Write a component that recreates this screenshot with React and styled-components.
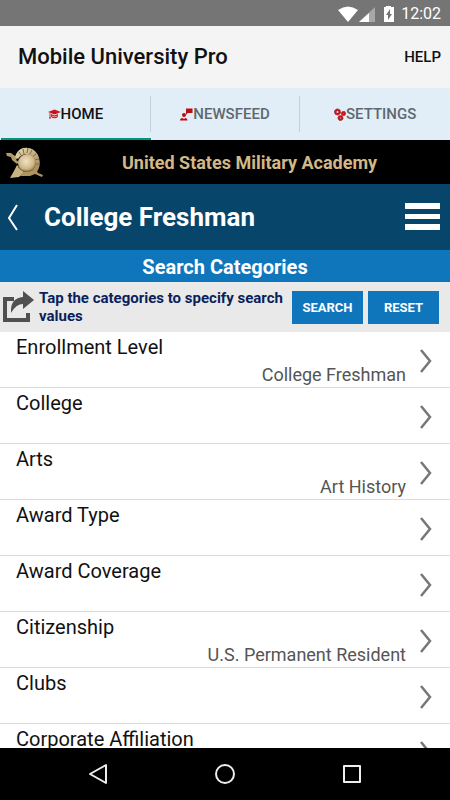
import React, { useState } from "react";
import styled, { createGlobalStyle } from "styled-components";

const categories = [
  { name: "Enrollment Level", value: "College Freshman" },
  { name: "College" },
  { name: "Arts", value: "Art History" },
  { name: "Award Type" },
  { name: "Award Coverage" },
  { name: "Citizenship", value: "U.S. Permanent Resident" },
  { name: "Clubs" },
  { name: "Corporate Affiliation" },
];

const CapIcon = () => (
  <svg width="13" height="10" viewBox="0 0 26 20" aria-hidden="true">
    <path d="M0 6 L13 1 L26 6 L13 11 Z" fill="#d0161c" />
    <path d="M6 10 L13 13 L20 10 L20 16 Q13 21 6 16 Z" fill="#d0161c" />
    <path d="M4 8 V14 M9 6 L17 8" stroke="#a30f14" strokeWidth="1.5" fill="none" />
    <path d="M4 12 L6 19 H2 Z" fill="#d0161c" />
    <path d="M7 14 Q13 17 19 14" stroke="#f3b9bd" strokeWidth="1.5" fill="none" />
  </svg>
);

const NewsIcon = () => (
  <svg width="13" height="13" viewBox="0 0 26 26" fill="#b90d10" aria-hidden="true">
    <path d="M12 1 H25 V10 H15 L12 14 Z" />
    <circle cx="8" cy="14" r="4" />
    <path d="M0 25 Q0 20 5 20 L8 22 L11 20 Q15 20 15 25 Z" />
  </svg>
);

const GearsIcon = () => (
  <svg width="12" height="13" viewBox="0 0 24 26" fill="none" aria-hidden="true">
    <g stroke="#7d1518" strokeWidth="2" strokeDasharray="2 1">
      <circle cx="7" cy="8" r="6" />
      <circle cx="19" cy="11" r="4" />
      <circle cx="13" cy="20" r="5" />
    </g>
    <g stroke="#c8161c" strokeWidth="4">
      <circle cx="7" cy="8" r="4" />
      <circle cx="19" cy="11" r="2.5" />
      <circle cx="13" cy="20" r="3" />
    </g>
  </svg>
);

const HelmetLogo = () => (
  <svg width="37" height="33" viewBox="0 0 37 33" role="img" aria-label="Academy crest">
    <defs>
      <radialGradient id="dome" cx="45%" cy="40%" r="60%">
        <stop offset="0" stopColor="#f1e2c2" />
        <stop offset="0.7" stopColor="#cfb888" />
        <stop offset="1" stopColor="#94774a" />
      </radialGradient>
      <linearGradient id="plume" x1="0" y1="0" x2="1" y2="1">
        <stop offset="0" stopColor="#eadbb4" />
        <stop offset="1" stopColor="#a08452" />
      </linearGradient>
    </defs>
    <path d="M0 7 L5 7 L9 10 L12 11 L10 14 L13 16 L11 18 L6 14 L5 11 L1 10 Z" fill="#b49a68" />
    <path d="M9 11 Q11 4 17 2 Q27 0 32 9 Q35 16 33 22 L31 26 L26 26 L30 18 Q29 9 21 8 Q15 8 12 13 Z" fill="url(#plume)" />
    <path
      d="M13 6 L15 9 M17 3 L18 8 M22 2 L21 7 M26 4 L24 8 M30 8 L26 11 M33 13 L28 14 M34 18 L29 18"
      stroke="#80683a"
      strokeWidth="1"
      fill="none"
    />
    <path d="M11 19 L18 26 L13 31 L4 32 L8 25 Z" fill="#cbb483" />
    <path d="M17 26 L29 23 L32 27 L37 29 L36 31 L29 28 L24 30 L14 30 Z" fill="#b0945f" />
    <circle cx="21" cy="17" r="9" fill="url(#dome)" />
    <path d="M12 21 Q17 28 27 24" stroke="#80683a" strokeWidth="1" fill="none" />
  </svg>
);

const ShareIcon = () => (
  <svg width="31" height="34" viewBox="0 0 31 34" aria-hidden="true">
    <path d="M11 9 H2 V30 H25 V23" fill="none" stroke="#505050" strokeWidth="4" />
    <path d="M20 1 L31 10 L20 19 V14 Q13 14 8 23 Q7 8 20 7 Z" fill="#505050" />
  </svg>
);

const StatusIcons = () => (
  <svg width="58" height="18" viewBox="0 0 58 18" aria-hidden="true">
    <path d="M0 5 Q10 -2 20 5 L10 17 Z" fill="#fff" />
    <path d="M37 2 V17 H21 Z" fill="#a8a8a8" />
    <path d="M31 8 V17 H21 Z" fill="#fff" />
    <path d="M48 1 H53 V2 H56 V17 H46 V2 H48 Z" fill="#fff" />
    <path d="M52 4 L48 10 H50 V15 L54 9 H52 Z" fill="#757575" />
  </svg>
);

const App = () => {
  const [activeTab, setActiveTab] = useState("HOME");

  const tabs = [
    { label: "HOME", icon: <CapIcon /> },
    { label: "NEWSFEED", icon: <NewsIcon /> },
    { label: "SETTINGS", icon: <GearsIcon /> },
  ];

  return (
    <>
      <GlobalStyle />
      <Screen>
        <StatusBar>
          <StatusIcons />
          <span>12:02</span>
        </StatusBar>
        <AppBar>
          <AppTitle>Mobile University Pro</AppTitle>
          <HelpButton type="button">HELP</HelpButton>
        </AppBar>
        <Tabs>
          {tabs.map((tab) => (
            <Tab key={tab.label} type="button" $active={tab.label === activeTab} onClick={() => setActiveTab(tab.label)}>
              <TabContent>
                {tab.icon}
                {tab.label}
              </TabContent>
            </Tab>
          ))}
        </Tabs>
        <SchoolBar>
          <HelmetLogo />
          <SchoolName>United States Military Academy</SchoolName>
        </SchoolBar>
        <PageHeader>
          <IconButton type="button" aria-label="Back">
            <svg width="12" height="28" viewBox="0 0 12 28" fill="none" stroke="#fff" strokeWidth="2">
              <path d="M9 2 L1 15 L9 27" />
            </svg>
          </IconButton>
          <PageTitle>College Freshman</PageTitle>
          <IconButton type="button" aria-label="Menu">
            <svg width="35" height="28" viewBox="0 0 35 28" fill="#fff">
              <path d="M0 0 H35 V6 H0 Z M0 11 H35 V16 H0 Z M0 21 H35 V27 H0 Z" />
            </svg>
          </IconButton>
        </PageHeader>
        <SectionTitle>Search Categories</SectionTitle>
        <Toolbar>
          <ShareIcon />
          <Hint>Tap the categories to specify search values</Hint>
          <ActionButton type="button">SEARCH</ActionButton>
          <ActionButton type="button">RESET</ActionButton>
        </Toolbar>
        <CategoryList>
          {categories.map((category) => (
            <li key={category.name}>
              <CategoryRow type="button">
                <CategoryText>
                  <CategoryName>{category.name}</CategoryName>
                  {category.value && <CategoryValue>{category.value}</CategoryValue>}
                </CategoryText>
                <svg width="12" height="24" viewBox="0 0 12 24" fill="none" stroke="#777" strokeWidth="2.5" aria-hidden="true">
                  <path d="M1 1 L10 12 L1 23" />
                </svg>
              </CategoryRow>
            </li>
          ))}
        </CategoryList>
        <NavBar>
          <IconButton type="button" aria-label="System back">
            <svg width="20" height="22" viewBox="0 0 20 22" fill="none" stroke="#eee" strokeWidth="2" strokeLinejoin="round">
              <path d="M18 2 V20 L2 11 Z" />
            </svg>
          </IconButton>
          <IconButton type="button" aria-label="System home">
            <svg width="22" height="22" viewBox="0 0 22 22" fill="none" stroke="#eee" strokeWidth="2">
              <circle cx="11" cy="11" r="9" />
            </svg>
          </IconButton>
          <IconButton type="button" aria-label="Recent apps">
            <svg width="20" height="20" viewBox="0 0 20 20" fill="none" stroke="#eee" strokeWidth="2" strokeLinejoin="round">
              <rect x="2" y="2" width="16" height="16" />
            </svg>
          </IconButton>
        </NavBar>
      </Screen>
    </>
  );
};

// Styled Components
const GlobalStyle = createGlobalStyle`
  * {
    box-sizing: border-box;
  }

  body {
    margin: 0;
    font-family: Roboto, "Liberation Sans", sans-serif;
  }

  button {
    padding: 0;
    border: none;
    background: none;
    font-family: inherit;
    cursor: pointer;
  }

  svg {
    display: block;
    flex-shrink: 0;
  }
`;

const Screen = styled.div`
  display: flex;
  flex-direction: column;
  height: 100vh;
  background: white;
`;

const StatusBar = styled.div`
  display: flex;
  align-items: center;
  justify-content: flex-end;
  gap: 5px;
  padding: 5px 9px 3px 0;
  background: #757575;
  color: white;
  font-size: 16px;
  line-height: 18px;
`;

const AppBar = styled.header`
  display: flex;
  align-items: center;
  justify-content: space-between;
  padding: 16px 9px 16px 18px;
  background: #f4f4f4;
`;

const AppTitle = styled.h1`
  margin: 0;
  font-size: 22px;
  font-weight: 500;
  line-height: 30px;
  color: #111;
`;

const HelpButton = styled.button`
  font-size: 15px;
  font-weight: 500;
  color: #111;
`;

const Tabs = styled.nav`
  display: grid;
  grid-template-columns: repeat(3, 1fr);
  padding-left: 1px;
  background: #e1eef8;
`;

const Tab = styled.button`
  padding: 8px 0 6px;
  border-bottom: 2px solid ${(props) => (props.$active ? "#009680" : "transparent")};
  font-size: 15px;
  font-weight: 500;
  color: ${(props) => (props.$active ? "#111" : "#5f686d")};
`;

const TabContent = styled.span`
  display: flex;
  align-items: center;
  justify-content: center;
  height: 36px;

  ${Tab}:not(:last-child) & {
    border-right: 1px solid #c4d1da;
  }
`;

const SchoolBar = styled.div`
  display: flex;
  align-items: center;
  padding: 0 6px;
  height: 44px;
  background: black;
`;

const SchoolName = styled.h2`
  flex: 1;
  margin: 0;
  padding-left: 12px;
  font-size: 18px;
  font-weight: 700;
  text-align: center;
  color: #d2b887;
`;

const PageHeader = styled.div`
  display: flex;
  align-items: center;
  padding: 19px 10px 19px 8px;
  background: #08456b;
`;

const IconButton = styled.button`
  display: flex;
  align-items: center;
  justify-content: center;
`;

const PageTitle = styled.h2`
  flex: 1;
  margin: 0;
  padding-left: 24px;
  font-size: 26px;
  font-weight: 700;
  line-height: 28px;
  color: white;
`;

const SectionTitle = styled.h3`
  margin: 0;
  padding: 2px 0 0;
  background: #0f76bc;
  color: white;
  font-size: 20px;
  font-weight: 700;
  line-height: 30px;
  text-align: center;
`;

const Toolbar = styled.div`
  display: flex;
  align-items: center;
  gap: 5px;
  padding: 7px 11px 7px 3px;
  background: #e9e9e9;
`;

const Hint = styled.p`
  flex: 1;
  margin: 0;
  font-size: 15px;
  font-weight: 700;
  line-height: 18px;
  color: #0a1f5c;
`;

const ActionButton = styled.button`
  width: 71px;
  height: 33px;
  background: #0f76bc;
  color: white;
  font-size: 13px;
  font-weight: 700;
`;

const CategoryList = styled.ul`
  flex: 1;
  min-height: 0;
  margin: 0;
  padding: 0;
  overflow: hidden;
  list-style: none;
`;

const CategoryRow = styled.button`
  display: flex;
  align-items: center;
  gap: 14px;
  width: 100%;
  height: 56px;
  padding: 2px 18px 0 16px;
  border-bottom: 1px solid #dcdcdc;
`;

const CategoryText = styled.span`
  display: flex;
  flex: 1;
  flex-direction: column;
  height: 54px;
`;

const CategoryName = styled.span`
  font-size: 20px;
  line-height: 27px;
  text-align: left;
  color: #111;
`;

const CategoryValue = styled.span`
  font-size: 18px;
  line-height: 27px;
  text-align: right;
  color: #555;
`;

const NavBar = styled.footer`
  display: flex;
  align-items: center;
  justify-content: space-between;
  padding: 0 88px;
  height: 52px;
  background: black;
`;

export default App;
